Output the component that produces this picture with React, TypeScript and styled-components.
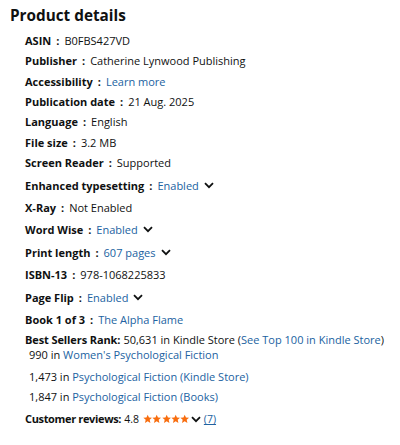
import React from "react";
import styled, { createGlobalStyle } from "styled-components";

const Global = createGlobalStyle`
  html, body { margin: 0; padding: 0; background: #fff; }
  body { font-family: "Open Sans", "Liberation Sans", Arial, sans-serif; color: #0f1111; }
`;

const Page = styled.div`
  width: 400px;
  height: 445px;
  box-sizing: border-box;
  padding: 3px 0 0 10px;
  overflow: hidden;
`;

const Title = styled.h2`
  margin: 0 0 4px 0;
  font-size: 15.3px;
  line-height: 24px;
  font-weight: 700;
  color: #0f1111;
`;

const List = styled.ul`
  list-style: none;
  margin: 0;
  padding: 0 0 0 15px;
  font-size: 11px;
  line-height: 20px;
`;

const Item = styled.li<{ $mb: number; $indent?: number }>`
  margin: 0 0 ${(p) => p.$mb}px ${(p) => p.$indent ?? 0}px;
  display: flex;
  align-items: center;
  white-space: nowrap;
`;

const Label = styled.span`
  font-weight: 700;
`;

const Colon = styled.span`
  font-weight: 700;
  margin: 0 5px 0 5px;
`;

const RankLabel = styled.span<{ $tight?: boolean }>`
  font-weight: 700;
  margin-right: 3px;
  letter-spacing: ${(p) => (p.$tight ? "-0.35px" : "-0.1px")};
`;

const Value = styled.span``;

const Link = styled.a<{ $u?: boolean }>`
  color: #2162a1;
  text-decoration: ${(p) => (p.$u ? "underline" : "none")};
`;

const ReviewLink = styled(Link)`
  margin-left: 3px;
  font-size: 10.5px;
`;

const Chevron = styled.svg<{ $tight?: boolean }>`
  width: 10px;
  height: 7px;
  margin-left: ${(p) => (p.$tight ? 1 : 5)}px;
`;

const Stars = styled.span`
  display: inline-flex;
  margin-left: 4px;
`;

const Small = styled.span`
  font-size: 10.5px;
`;

const Down = ({ tight }: { tight?: boolean }) => (
  <Chevron viewBox="0 0 10 7" $tight={tight}>
    <path d="M1 1.2 L5 5.2 L9 1.2" fill="none" stroke="#0f1111" strokeWidth="1.8" />
  </Chevron>
);

const Star = () => (
  <svg width="9.4" height="10" viewBox="0 0 24 24">
    <path
      d="M12 1l3.2 7.3 7.9.7-6 5.2 1.8 7.8L12 18l-6.9 4 1.8-7.8-6-5.2 7.9-.7z"
      fill="#f86d0e"
    />
  </svg>
);

type Row = { label: string; value?: string; link?: string; drop?: boolean; mb: number };

const rows: Row[] = [
  { label: "ASIN", value: "B0FBS427VD", mb: 0.33 },
  { label: "Publisher", value: "Catherine Lynwood Publishing", mb: 0.33 },
  { label: "Accessibility", link: "Learn more", mb: 0.33 },
  { label: "Publication date", value: "21 Aug. 2025", mb: 0.33 },
  { label: "Language", value: "English", mb: 0.33 },
  { label: "File size", value: "3.2 MB", mb: 0.33 },
  { label: "Screen Reader", value: "Supported", mb: 2.6 },
  { label: "Enhanced typesetting", link: "Enabled", drop: true, mb: 2.2 },
  { label: "X-Ray", value: "Not Enabled", mb: 2.2 },
  { label: "Word Wise", link: "Enabled", drop: true, mb: 2.8 },
  { label: "Print length", link: "607 pages", drop: true, mb: 2.6 },
  { label: "ISBN-13", value: "978-1068225833", mb: 2.2 },
  { label: "Page Flip", link: "Enabled", drop: true, mb: 2.8 },
];

export default function App() {
  return (
    <Page>
      <Global />
      <Title>Product details</Title>
      <List>
        {rows.map((r) => (
          <Item key={r.label} $mb={r.mb}>
            <Label>{r.label}</Label>
            <Colon>:</Colon>
            {r.value && <Value>{r.value}</Value>}
            {r.link && <Link>{r.link}</Link>}
            {r.drop && <Down />}
          </Item>
        ))}
        <Item $mb={0}>
          <Label>Book 1 of 3</Label>
          <Colon>:</Colon>
          <Link>The Alpha Flame</Link>
        </Item>
        <Item $mb={-5}>
          <RankLabel>Best Sellers Rank:</RankLabel>
          <Value>
            50,631 in Kindle Store (<Link>See Top 100 in Kindle Store</Link>)
          </Value>
        </Item>
        <Item $mb={2} $indent={4}>
          <Value>
            990 in <Link>Women's Psychological Fiction</Link>
          </Value>
        </Item>
        <Item $mb={0} $indent={4}>
          <Value>
            1,473 in <Link>Psychological Fiction (Kindle Store)</Link>
          </Value>
        </Item>
        <Item $mb={2} $indent={4}>
          <Value>
            1,847 in <Link>Psychological Fiction (Books)</Link>
          </Value>
        </Item>
        <Item $mb={0}>
          <RankLabel $tight>Customer reviews:</RankLabel>
          <Small>4.8</Small>
          <Stars>
            <Star />
            <Star />
            <Star />
            <Star />
            <Star />
          </Stars>
          <Down tight />
          <ReviewLink $u>(7)</ReviewLink>
        </Item>
      </List>
    </Page>
  );
}
